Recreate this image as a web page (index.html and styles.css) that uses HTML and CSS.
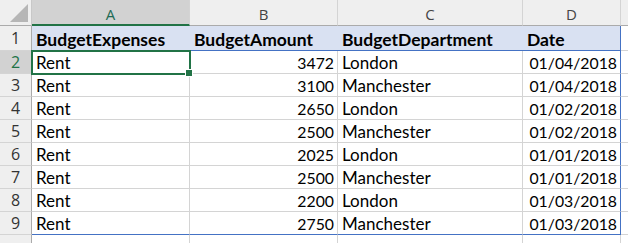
FILE: index.html
```html
<!DOCTYPE html>
<html lang="en">

<head>
    <meta charset="UTF-8">
    <title>Budget</title>
    <link rel="stylesheet" href="styles.css">
</head>

<body>
    <div class="sheet">
        <!-- column headers -->
        <div class="corner"><span class="tri"></span></div>
        <div class="colhead active">A</div>
        <div class="colhead">B</div>
        <div class="colhead">C</div>
        <div class="colhead">D</div>
        <div class="colhead extra"></div>

        <!-- table header row -->
        <div class="rowhead r1">1</div>
        <div class="cell th">BudgetExpenses</div>
        <div class="cell th">BudgetAmount</div>
        <div class="cell th">BudgetDepartment</div>
        <div class="cell th last">Date</div>
        <div class="cell blank r1"></div>

        <div class="rowhead active">2</div>
        <div class="cell selected">Rent<span class="handle"></span></div>
        <div class="cell num">3472</div>
        <div class="cell">London</div>
        <div class="cell num last">01/04/2018</div>
        <div class="cell blank"></div>

        <div class="rowhead">3</div>
        <div class="cell">Rent</div>
        <div class="cell num">3100</div>
        <div class="cell">Manchester</div>
        <div class="cell num last">01/04/2018</div>
        <div class="cell blank"></div>

        <div class="rowhead">4</div>
        <div class="cell">Rent</div>
        <div class="cell num">2650</div>
        <div class="cell">London</div>
        <div class="cell num last">01/02/2018</div>
        <div class="cell blank"></div>

        <div class="rowhead">5</div>
        <div class="cell">Rent</div>
        <div class="cell num">2500</div>
        <div class="cell">Manchester</div>
        <div class="cell num last">01/02/2018</div>
        <div class="cell blank"></div>

        <div class="rowhead">6</div>
        <div class="cell">Rent</div>
        <div class="cell num">2025</div>
        <div class="cell">London</div>
        <div class="cell num last">01/01/2018</div>
        <div class="cell blank"></div>

        <div class="rowhead">7</div>
        <div class="cell">Rent</div>
        <div class="cell num">2500</div>
        <div class="cell">Manchester</div>
        <div class="cell num last">01/01/2018</div>
        <div class="cell blank"></div>

        <div class="rowhead">8</div>
        <div class="cell">Rent</div>
        <div class="cell num">2200</div>
        <div class="cell">London</div>
        <div class="cell num last">01/03/2018</div>
        <div class="cell blank"></div>

        <div class="rowhead">9</div>
        <div class="cell bottom">Rent</div>
        <div class="cell num bottom">2750</div>
        <div class="cell bottom">Manchester</div>
        <div class="cell num last bottom">01/03/2018</div>
        <div class="cell blank"></div>

        <div class="rowhead"></div>
        <div class="cell"></div>
        <div class="cell"></div>
        <div class="cell"></div>
        <div class="cell"></div>
        <div class="cell blank"></div>
    </div>
</body>

</html>
```

FILE: styles.css
```css
/* spreadsheet grid */
body {
    margin: 0;
    background: #fff;
    font-family: Lato, "Liberation Sans", sans-serif;
    overflow: hidden;
}

.sheet {
    display: grid;
    grid-template-columns: 32px 158px 148px 185px 98px 20px;
    grid-template-rows: 26px 25px repeat(8, 23px) 23px;
    width: 628px;
    height: 243px;
    overflow: hidden;
}

.corner {
    position: relative;
    background: #efefef;
    border-right: 1px solid #c8c8c8;
    border-bottom: 1px solid #ababab;
}

.corner .tri {
    position: absolute;
    right: 3px;
    bottom: 3px;
    width: 0;
    height: 0;
    border-left: 18px solid transparent;
    border-bottom: 18px solid #b6b6b6;
}

.colhead {
    background: #efefef;
    border-right: 1px solid #d4d4d4;
    border-bottom: 1px solid #ababab;
    color: #444;
    font-family: "Open Sans", sans-serif;
    font-size: 15px;
    display: flex;
    align-items: center;
    justify-content: center;
    padding-top: 3px;
    box-sizing: border-box;
}

.colhead.active {
    background: #d2d2d2;
    color: #1e6b55;
    border-bottom: 2px solid #217346;
}

.colhead.extra {
    border-right: none;
}

.rowhead {
    background: #efefef;
    border-right: 1px solid #ababab;
    border-bottom: 1px solid #d4d4d4;
    color: #333;
    font-family: "Open Sans", sans-serif;
    font-size: 16px;
    display: flex;
    align-items: center;
    justify-content: center;
}

.rowhead.active {
    background: #d2d2d2;
    color: #217346;
}

.cell {
    position: relative;
    border-right: 1px solid #d4d4d4;
    border-bottom: 1px solid #d4d4d4;
    font-size: 17px;
    color: #000;
    padding: 0 3px 0 4px;
    display: flex;
    align-items: center;
    white-space: nowrap;
    box-sizing: border-box;
}

.cell.th {
    background: #d9e1f2;
    font-weight: bold;
    font-size: 17.5px;
    border-right: none;
    border-bottom: 1px solid #4472c4;
    padding-top: 2px;
}

.cell.num {
    justify-content: flex-end;
    font-size: 15.8px;
}

.cell.last {
    border-right: 1px solid #4472c4;
}

.cell.bottom {
    border-bottom: 1px solid #4472c4;
}

.cell.blank {
    border-right: none;
}

.cell.selected {
    outline: 2px solid #217346;
    outline-offset: -1px;
    z-index: 1;
}

.handle {
    position: absolute;
    right: -4px;
    bottom: -4px;
    width: 6px;
    height: 6px;
    background: #217346;
    border: 1px solid #fff;
}
```
